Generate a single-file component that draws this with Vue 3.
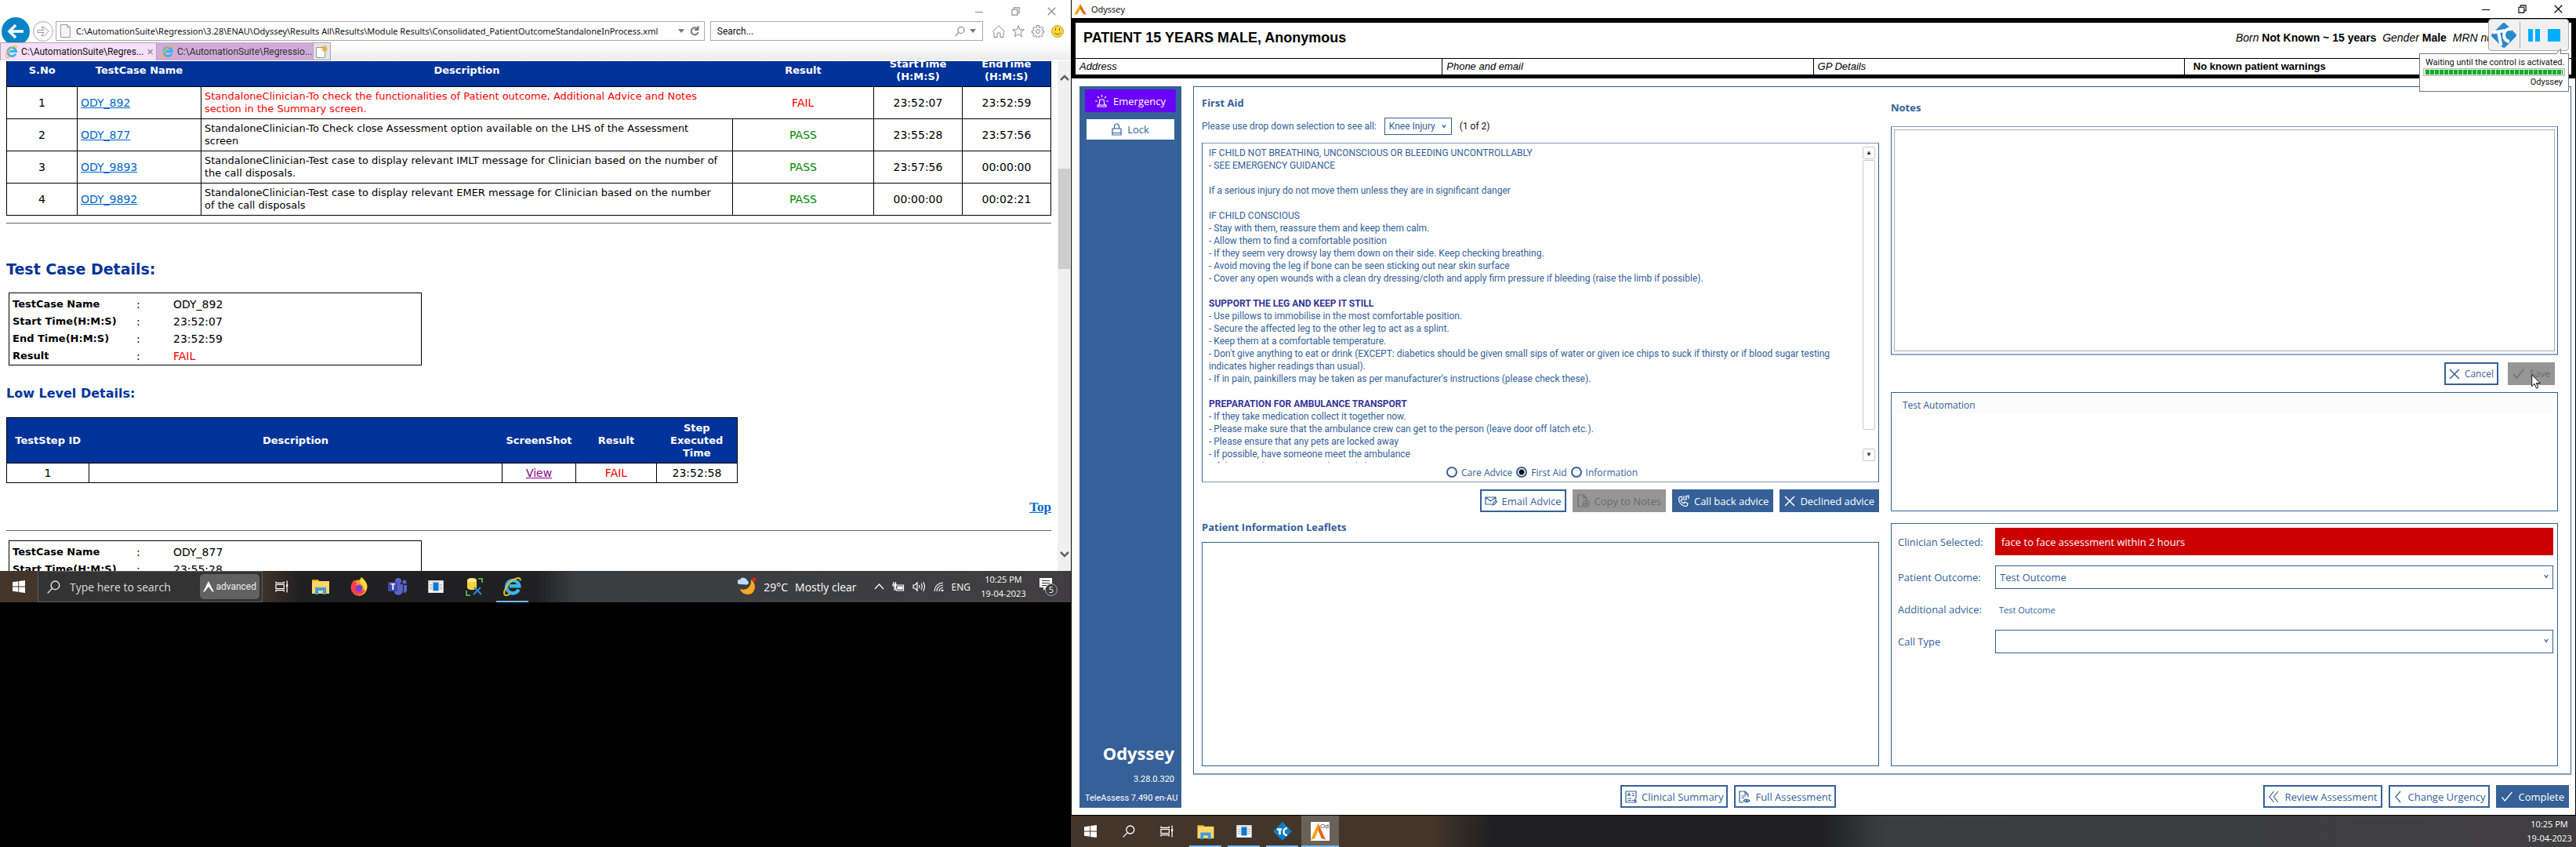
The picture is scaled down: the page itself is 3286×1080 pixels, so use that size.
<script setup>
import { ref } from 'vue'

const reportUrl = ref('C:\\AutomationSuite\\Regression\\3.28\\ENAU\\Odyssey\\Results All\\Results\\Module Results\\Consolidated_PatientOutcomeStandaloneInProcess.xml')
const advice = ref('First Aid')
const adviceKinds = ['Care Advice', 'First Aid', 'Information']

const cases = [
  { id: 'ODY_892', text: 'StandaloneClinician-To check the functionalities of Patient outcome, Additional Advice and Notes section in the Summary screen.', result: 'FAIL', start: '23:52:07', end: '23:52:59' },
  { id: 'ODY_877', text: 'StandaloneClinician-To Check close Assessment option available on the LHS of the Assessment screen', result: 'PASS', start: '23:55:28', end: '23:57:56' },
  { id: 'ODY_9893', text: 'StandaloneClinician-Test case to display relevant IMLT message for Clinician based on the number of the call disposals.', result: 'PASS', start: '23:57:56', end: '00:00:00' },
  { id: 'ODY_9892', text: 'StandaloneClinician-Test case to display relevant EMER message for Clinician based on the number of the call disposals', result: 'PASS', start: '00:00:00', end: '00:02:21' }
]

const adviceBlocks = [
  { lines: ['IF CHILD NOT BREATHING, UNCONSCIOUS OR BLEEDING UNCONTROLLABLY', '- SEE EMERGENCY GUIDANCE'] },
  { lines: ['If a serious injury do not move them unless they are in significant danger'] },
  { lines: ['IF CHILD CONSCIOUS', '- Stay with them, reassure them and keep them calm.', '- Allow them to find a comfortable position', '- If they seem very drowsy lay them down on their side. Keep checking breathing.', '- Avoid moving the leg if bone can be seen sticking out near skin surface', '- Cover any open wounds with a clean dry dressing/cloth and apply firm pressure if bleeding (raise the limb if possible).'] },
  { title: 'SUPPORT THE LEG AND KEEP IT STILL', lines: ['- Use pillows to immobilise in the most comfortable position.', '- Secure the affected leg to the other leg to act as a splint.', '- Keep them at a comfortable temperature.', "- Don't give anything to eat or drink (EXCEPT: diabetics should be given small sips of water or given ice chips to suck if thirsty or if blood sugar testing indicates higher readings than usual).", "- If in pain, painkillers may be taken as per manufacturer's instructions (please check these)."] },
  { title: 'PREPARATION FOR AMBULANCE TRANSPORT', lines: ['- If they take medication collect it together now.', '- Please make sure that the ambulance crew can get to the person (leave door off latch etc.).', '- Please ensure that any pets are locked away', '- If possible, have someone meet the ambulance', '- If their condition worsens please dial 999'] }
]
</script>

<template>
  <svg class="defs" aria-hidden="true">
    <symbol id="i-win" viewBox="0 0 16 16"><path fill="#fff" d="M0 2.2 7.3 1.2V7.5H0zM8.2 1.1 16 0V7.5H8.2zM0 8.5H7.3V14.8L0 13.8zM8.2 8.5H16V16L8.2 14.9z" /></symbol>
    <symbol id="i-search" viewBox="0 0 16 16"><g fill="none" stroke="currentColor" stroke-width="1.3"><circle cx="9.8" cy="6" r="5" /><path d="M6.3 9.6 .7 15.4" /></g></symbol>
    <symbol id="i-tasks" viewBox="0 0 18 16"><g fill="none" stroke="#fff" stroke-width="1.3"><path d="M1 1v2h11V1M1 15v-2h11v2" /><rect x="1" y="5.3" width="11" height="5.4" /><path d="M16 0v16" /></g><rect x="14.8" y="5" width="2.4" height="3" fill="#fff" /></symbol>
    <symbol id="i-folder" viewBox="0 0 22 20"><path fill="#e8a200" d="M0 1h8l2 3H0z" /><path fill="#ffd666" d="M0 3h22v16H0z" /><path fill="#3f9be0" d="M4 11h14v9h-4v-5H8v5H4z" /></symbol>
    <symbol id="i-console" viewBox="0 0 22 18"><rect width="22" height="18" fill="#ddd" /><rect x="1" y="3" width="20" height="14" fill="#f7f7f7" /><rect x="7" y="3" width="8" height="12" fill="#0b78d7" /><path stroke="#999" d="M2 6h4M2 9h4M2 12h4M16 6h4M16 9h4M16 12h4" /></symbol>
    <symbol id="i-ie" viewBox="0 0 22 22"><path fill="none" stroke="#3cb4ea" stroke-width="4" d="M18 14.500a7.500 7.500 0 1 1 .7-4.200H7" /><path fill="none" stroke="#f0c030" stroke-width="1.800" d="M1.500 20.500C-1 15 8 4 15 1.500c3.500-1.200 5.300-.2 4.800 2.500M1.500 20.500c1.500 1.500 4 .5 6.500-1" /></symbol>
    <symbol id="i-flame" viewBox="0 0 16 18"><path fill="#f5a400" d="M8 0 0 18l4.500-1.500L8 8z" /><path fill="#e8641b" d="m8 0 8 18-4.500-1.500L8 8z" /></symbol>
    <symbol id="i-cross" viewBox="0 0 14 14"><path d="m1 1 12 12M13 1 1 13" fill="none" stroke="currentColor" stroke-width="1.500" /></symbol>
    <symbol id="i-tick" viewBox="0 0 16 14"><path d="m1 8 4 5L15 1" fill="none" stroke="currentColor" stroke-width="1.500" /></symbol>
    <symbol id="i-restore" viewBox="0 0 12 12"><path d="M1 3.500h7.500V11H1zM3.500 3.500V1H11v7.500H8.500" fill="none" stroke="currentColor" stroke-width="1.200" /></symbol>
    <symbol id="i-chev" viewBox="0 0 6 6"><path d="m.8 1 2.200 3.500L5.200 1" fill="none" stroke="currentColor" stroke-width="1.300" /></symbol>
    <symbol id="i-tc" viewBox="0 0 32 32"><path fill="#2a88cc" d="M14 1q2-2 4 0l13 13q2 2 0 4L18 31q-2 2-4 0L1 18q-2-2 0-4z" /><path fill="none" stroke="#fff" stroke-width="4" d="M2 12.500 17 10M9 12l3.500 17M26 8.500c-11-4-14 14-3 15.500" /></symbol>
  </svg>
  <div class="desktop">
    <section class="screen left">
      <header class="ie-top">
        <div class="caption grey">
          <button aria-label="Minimise"><svg width="10" height="10" viewBox="0 0 10 10"><path d="M0 5.500h10" stroke="currentColor" /></svg></button>
          <button aria-label="Restore"><svg width="11" height="11"><use href="#i-restore" /></svg></button>
          <button aria-label="Close"><svg width="11" height="11"><use href="#i-cross" /></svg></button>
        </div>
        <div class="toolbar">
          <button class="back" aria-label="Back"><svg width="22" height="20" viewBox="0 0 22 20"><path d="M21 10H3M11 2l-8 8 8 8" fill="none" stroke="#fff" stroke-width="3.500" /></svg></button>
          <button class="fwd" aria-label="Forward"><svg width="16" height="14" viewBox="0 0 16 14"><path d="M1 5.500h8L6 1.500h3L15 7l-6 5.500H6l3-4H1z" fill="none" stroke="#999" /></svg></button>
          <div class="field address">
            <svg width="13" height="17" viewBox="0 0 13 17"><path d="M.5.500H9l3.500 3.500v12.500H.5zM9 .5V4h3.500" fill="#f6f6f6" stroke="#999" /></svg>
            <input v-model="reportUrl" aria-label="Address">
            <svg width="8" height="5"><path d="M0 0h8L4 5z" fill="#777" /></svg>
            <svg width="12" height="13" viewBox="0 0 12 13"><path d="M10 4.500A4.500 4.500 0 1 0 10.500 8M10.500 0v5H6" fill="none" stroke="#777" stroke-width="2" /></svg>
          </div>
          <div class="field find">
            <input placeholder="Search..." aria-label="Search the web">
            <svg class="loupe" width="13" height="14"><use href="#i-search" /></svg>
            <svg width="8" height="5"><path d="M0 0h8L4 5z" fill="#777" /></svg>
          </div>
          <nav class="tools">
            <button aria-label="Home"><svg width="16" height="16" viewBox="0 0 16 16"><path d="m.5 8.500 7.500-8 7.500 8-1.500 1V15.500H10V10H6v5.500H2V9.500z" /></svg></button>
            <button aria-label="Favourites"><svg width="16" height="16" viewBox="0 0 16 16"><path d="m8 .8 2 5.100h5.300l-4.200 3.300 1.600 5.600L8 11.500l-4.700 3.300 1.600-5.600L.7 5.900H6z" /></svg></button>
            <button aria-label="Tools"><svg width="16" height="16" viewBox="0 0 16 16"><circle cx="8" cy="8" r="2.500" /><path d="M6.500.5h3V3l1.500.6 1.800-1.700 2 2L13 5.800l.5 1.200h2v3h-2l-.6 1.200 1.600 1.800-2 2-1.700-1.600-1.300.6v2h-3v-2l-1.200-.6L3.500 15l-2-2L3 11.200 2.500 10h-2V7h2L3 5.800 1.400 4l2-2 1.800 1.600L6.500 3z" /></svg></button>
            <button aria-label="Feedback"><svg width="16" height="16" viewBox="0 0 16 16"><circle class="face" cx="8" cy="8" r="7.500" /><path class="smile" d="M5.500 4v3M10.500 4v3M4 9.500c2 3 6 3 8 0" /></svg></button>
          </nav>
        </div>
        <div class="tabs">
          <a href="#report" class="tab on"><svg width="16" height="16"><use href="#i-ie" /></svg><span>C:\AutomationSuite\Regres...</span><b>✕</b></a>
          <a href="#other" class="tab"><svg width="16" height="16"><use href="#i-ie" /></svg><span>C:\AutomationSuite\Regressio...</span></a>
          <button class="newtab" aria-label="New tab"><svg width="15" height="16" viewBox="0 0 15 16"><path d="M.5 2.500h11v13H.5z" fill="#fff" stroke="#999" /><path d="M11 0v8M7 4h8M8 1l6 6M14 1 8 7" stroke="#f0a030" stroke-width="1.200" /></svg></button>
        </div>
      </header>

      <div class="viewport">
        <main id="report" class="report">
          <table class="grid summary">
            <colgroup><col class="c-no"><col class="c-name"><col><col class="c-res"><col class="c-time"><col class="c-time"></colgroup>
            <thead><tr><th>S.No</th><th>TestCase Name</th><th>Description</th><th>Result</th><th>StartTime (H:M:S)</th><th>EndTime (H:M:S)</th></tr></thead>
            <tbody>
              <tr v-for="(c, i) in cases" :key="c.id" :class="c.result">
                <td class="mid">{{ i + 1 }}</td>
                <td><a href="#report">{{ c.id }}</a></td>
                <td class="desc">{{ c.text }}</td>
                <td class="mid res">{{ c.result }}</td>
                <td class="mid">{{ c.start }}</td>
                <td class="mid">{{ c.end }}</td>
              </tr>
            </tbody>
          </table>
          <hr>
          <h1>Test Case Details:</h1>
          <table class="facts">
            <tbody>
              <tr><th>TestCase Name</th><td>:</td><td>ODY_892</td></tr>
              <tr><th>Start Time(H:M:S)</th><td>:</td><td>23:52:07</td></tr>
              <tr><th>End Time(H:M:S)</th><td>:</td><td>23:52:59</td></tr>
              <tr><th>Result</th><td>:</td><td class="bad">FAIL</td></tr>
            </tbody>
          </table>
          <h2>Low Level Details:</h2>
          <table class="grid steps">
            <colgroup><col class="s-id"><col><col class="s-shot"><col class="s-time"><col class="s-time"></colgroup>
            <thead><tr><th>TestStep ID</th><th>Description</th><th>ScreenShot</th><th>Result</th><th>Step Executed Time</th></tr></thead>
            <tbody><tr><td class="mid">1</td><td></td><td class="mid"><a class="seen" href="#report">View</a></td><td class="mid bad">FAIL</td><td class="mid">23:52:58</td></tr></tbody>
          </table>
          <p class="top"><a href="#report">Top</a></p>
          <hr class="second">
          <table class="facts">
            <tbody>
              <tr><th>TestCase Name</th><td>:</td><td>ODY_877</td></tr>
              <tr><th>Start Time(H:M:S)</th><td>:</td><td>23:55:28</td></tr>
            </tbody>
          </table>
        </main>
        <div class="vscroll">
          <svg width="12" height="10" viewBox="0 0 12 10"><path d="m1 8 5-5 5 5" fill="none" stroke="#606060" stroke-width="2.500" /></svg>
          <i></i>
          <svg width="12" height="10" viewBox="0 0 12 10"><path d="m1 2 5 5 5-5" fill="none" stroke="#606060" stroke-width="2.500" /></svg>
        </div>
      </div>

      <footer class="taskbar">
        <button class="start" aria-label="Start"><svg width="16" height="16"><use href="#i-win" /></svg></button>
        <div class="tsearch">
          <svg width="17" height="17"><use href="#i-search" /></svg>
          <input placeholder="Type here to search" aria-label="Type here to search">
          <span class="badge"><svg width="14" height="14" viewBox="0 0 14 14"><path d="M7 0 0 14l2.500-1L7 7l4.500 6 2.500 1z" fill="#fff" /></svg>advanced</span>
        </div>
        <button aria-label="Task view"><svg width="17" height="16"><use href="#i-tasks" /></svg></button>
        <button aria-label="File Explorer"><svg width="22" height="20"><use href="#i-folder" /></svg></button>
        <button aria-label="Firefox"><svg width="24" height="24" viewBox="0 0 24 24"><circle cx="12" cy="13.500" r="10.200" fill="#ff9a1c" /><path fill="#ff3b4e" d="M2 10C3 6 5 4 6 3l1 3 2 1-1 4 5 2-3 3c2 3 7 2 9-1 0 6-6 9-11 7-5-2-7-7-6-12z" /><path fill="#ffd83a" d="M15 0c5 4 9 9 7 15-2 3-4 2-4-1 0-4-5-5-5-9 0-2 1-4 2-5z" /><circle cx="12" cy="14" r="4.500" fill="#7a3fd6" /></svg></button>
        <button aria-label="Teams"><svg width="24" height="22" viewBox="0 0 24 22"><g fill="#5b63c8"><circle cx="13" cy="4" r="4" /><circle cx="21" cy="5" r="2.600" /><path d="M8 8h11v8a6 6 0 0 1-11 3zM20 9h4v6a4 4 0 0 1-4 4z" /></g><path fill="#4046a8" d="M0 5h12v12H0z" /><text x="3" y="15" font-size="11" font-weight="bold" fill="#fff">T</text></svg></button>
        <button aria-label="Console"><svg width="22" height="16"><use href="#i-console" /></svg></button>
        <button aria-label="Database tools"><svg width="22" height="23" viewBox="0 0 22 23"><path fill="#ffd23f" d="M2 2c3-3 9-3 12 0v11c-3 3-9 3-12 0z" /><ellipse cx="8" cy="3" rx="6" ry="2" fill="#ffe9a0" /><path d="M16 1h5v5M1 16v6h5" fill="none" stroke="#4aa84a" stroke-width="2" /><path d="m10 21 9-9M11 12l9 9" stroke="#2a88cc" stroke-width="2.200" /></svg></button>
        <button class="run" aria-label="Internet Explorer"><svg width="24" height="24"><use href="#i-ie" /></svg></button>
        <span class="grow"></span>
        <div class="weather">
          <svg width="24" height="24" viewBox="0 0 24 24"><path fill="#f7a823" d="M17 3c8 5 6 19-4 19-5 0-9-3-10-7 8 3 15-3 14-12z" /><path fill="#c3d9fb" d="M2 9a3 3 0 0 1 1-6 5 5 0 0 1 9 1 3 3 0 0 1 0 5.500z" /><circle cx="21" cy="3" r="2.700" fill="#d0271d" /></svg>
          <span>29°C</span><span>Mostly clear</span>
        </div>
        <div class="tray">
          <svg width="13" height="8" viewBox="0 0 13 8"><path d="m1 7 5.500-6L12 7" /></svg>
          <svg width="16" height="12" viewBox="0 0 16 12"><path d="M3.500 4h11v7h-9zM2 0v3M4.500 0v3M1 3h4v2H1zM3 5v5h2" /><path d="M7 6h6v3H7z" fill="#fff" /></svg>
          <svg width="17" height="14" viewBox="0 0 17 14"><path d="M1 5h2l3-3v10L3 9H1zM8.500 5q1 2 0 4M11 3q2.500 4 0 8M13.500 1q4 6 0 12" /></svg>
          <svg width="13" height="12" viewBox="0 0 13 12"><path d="M1 12Q2 2 12 1M4 12q0-7 8-8M7 12q0-4 5-5" /><circle cx="11" cy="11" r="1" /></svg>
          <span>ENG</span>
        </div>
        <time class="clock">10:25 PM<br>19-04-2023</time>
        <span class="bell">
          <svg width="24" height="24" viewBox="0 0 24 24"><path fill="#fff" d="M1 1h16v12H10l-4 4v-4H1z" /><path d="M4 4.500h10M4 7.500h10M4 10.500h6" stroke="#333" /><circle cx="16" cy="16" r="7.500" fill="#3a3c3f" stroke="#aaa" /></svg><b>5</b>
        </span>
      </footer>
    </section>

    <section class="screen right">
      <header class="titlebar">
        <svg width="16" height="14" viewBox="0 0 16 18" preserveAspectRatio="none"><use href="#i-flame" /></svg><span>Odyssey</span>
        <div class="caption dark">
          <button aria-label="Minimise"><svg width="10" height="10" viewBox="0 0 10 10"><path d="M0 5.500h10" stroke="currentColor" /></svg></button>
          <button aria-label="Restore"><svg width="11" height="11"><use href="#i-restore" /></svg></button>
          <button aria-label="Close"><svg width="11" height="11"><use href="#i-cross" /></svg></button>
        </div>
      </header>
      <div class="patient">
        <div class="who">
          <h1>PATIENT 15 YEARS MALE, Anonymous</h1>
          <p><i>Born</i> <b>Not Known ~ 15 years</b> <i class="gap">Gender</i> <b>Male</b> <i class="gap">MRN number</i></p>
        </div>
        <div class="contact"><i>Address</i><i>Phone and email</i><i>GP Details</i><b>No known patient warnings</b></div>
      </div>
      <div class="runner">
        <div class="runbar">
          <svg width="32" height="32"><use href="#i-tc" /></svg>
          <span class="rule"></span>
          <button class="pause" aria-label="Pause"></button>
          <button class="stop" aria-label="Stop"></button>
        </div>
        <div class="bubble">
          <svg class="tail" width="12" height="8" viewBox="0 0 12 8"><path d="M.5 8 6.500 1V8" fill="#fff" stroke="#777" /></svg>
          <p>Waiting until the control is activated.</p>
          <div class="progress"><i></i></div>
          <p class="end">Odyssey</p>
        </div>
      </div>

      <div class="app">
        <div class="work">
          <aside>
            <button class="emergency"><svg width="17" height="16" viewBox="0 0 17 16"><path d="M5 13 6 6h5l1 7M3 15V13h11v2zM8.500 0v3M3 2l2 2M14 2l-2 2M0 8h3M14 8h3" /></svg>Emergency</button>
            <button class="lock"><svg width="13" height="16" viewBox="0 0 13 16"><path d="M1 7h11v8H1zM3.500 7V4a3 3 0 0 1 6 0v3M1 12.500h11" /></svg>Lock</button>
            <div class="brand"><strong>Odyssey</strong><span>3.28.0.320</span><span>TeleAssess 7.490 en-AU</span></div>
          </aside>
          <div class="panel">
            <div class="col">
              <h2>First Aid</h2>
              <div class="pick">
                <label for="kind">Please use drop down selection to see all:</label>
                <span class="select"><select id="kind"><option>Knee Injury</option></select><svg width="6" height="6"><use href="#i-chev" /></svg></span>
                <span class="count">(1 of 2)</span>
              </div>
              <div class="box advice">
                <div class="scroller">
                  <div class="words">
                    <p v-for="(b, i) in adviceBlocks" :key="i">
                      <strong v-if="b.title">{{ b.title }}</strong>
                      <span v-for="l in b.lines" :key="l">{{ l }}</span>
                    </p>
                  </div>
                  <div class="rail"><button aria-label="Scroll up">▲</button><i></i><button aria-label="Scroll down">▼</button></div>
                </div>
                <div class="kinds">
                  <label v-for="k in adviceKinds" :key="k"><input v-model="advice" type="radio" name="advice" :value="k">{{ k }}</label>
                </div>
              </div>
              <div class="actions">
                <button class="btn"><svg width="16" height="16" viewBox="0 0 16 16"><path d="M9 12H1V3h13v4M1 3l6.500 5L14 3M10 13l1-3 3-3 1.500 1.500-3 3.500z" /></svg>Email Advice</button>
                <button class="btn off" disabled><svg width="16" height="18" viewBox="0 0 16 18"><path d="M7 16H1V1h7l4 4v3M8 1v4h4" /><circle cx="11" cy="12.500" r="4" /><path d="M11 10v5M8.500 12.500h5" /></svg>Copy to Notes</button>
                <button class="btn solid"><svg width="16" height="16" viewBox="0 0 16 16"><path d="M3 3l3-1 1 4-2 1c1 2 2 3 4 4l1-2 4 2-1 3c-5 2-12-4-10-11zM9 5V1M12 1v5H8M11 2l4-1v4" /></svg>Call back advice</button>
                <button class="btn solid"><svg width="14" height="14"><use href="#i-cross" /></svg>Declined advice</button>
              </div>
              <h2>Patient Information Leaflets</h2>
              <div class="box leaflets"></div>
            </div>

            <div class="col notes">
              <h2>Notes</h2>
              <div class="box pad"><textarea aria-label="Notes"></textarea></div>
              <div class="actions wide">
                <button class="btn small"><svg width="14" height="14"><use href="#i-cross" /></svg>Cancel</button>
                <button class="btn off save" disabled><svg width="16" height="13"><use href="#i-tick" /></svg>Save</button>
                <svg class="cursor" width="12" height="19" viewBox="0 0 12 19"><path d="M.7.700v15l3.400-3.300 2.400 5.700 2.300-1-2.400-5.500h4.900z" fill="#fff" stroke="#111" /></svg>
              </div>
              <div class="box list"><p>Test Automation</p></div>
              <form class="box form" @submit.prevent>
                <span class="lab">Clinician Selected:</span><output class="urgent">face to face assessment within 2 hours</output>
                <label class="lab" for="outcome">Patient Outcome:</label>
                <span class="select tall"><select id="outcome"><option>Test Outcome</option></select><svg width="6" height="6"><use href="#i-chev" /></svg></span>
                <span class="lab">Additional advice:</span><span class="extra">Test Outcome</span>
                <label class="lab" for="call">Call Type</label>
                <span class="select tall"><select id="call"><option></option></select><svg width="6" height="6"><use href="#i-chev" /></svg></span>
              </form>
            </div>
          </div>
          <nav class="bottom">
            <span></span>
            <div>
              <button class="btn"><svg width="15" height="16" viewBox="0 0 15 16"><path d="M1 1h13v9M14 14v1H1V1M3.500 7 5 3.500 6.500 7M8.500 4H12M8.500 6.500H12M3.500 10H8M3.500 12.500H8M9 12.500h5M12 10.500l2 2-2 2" /></svg>Clinical Summary</button>
              <button class="btn"><svg width="15" height="16" viewBox="0 0 15 16"><path d="M6 15H1V1h7l4 4v3M8 1v4h4M3.500 7H9M3.500 9.500H7M6 13q3.500-4 8 0-4 3.500-8 0" /><circle cx="10" cy="13" r="1" /></svg>Full Assessment</button>
            </div>
            <div>
              <button class="btn"><svg width="15" height="16" viewBox="0 0 15 16"><path d="M7.500 1 2 8l5.500 7M13 1 7.500 8l5.500 7" /></svg>Review Assessment</button>
              <button class="btn"><svg width="13" height="16" viewBox="0 0 13 16"><path d="M9 1 3 8l6 7" /></svg>Change Urgency</button>
              <button class="btn solid"><svg width="16" height="13"><use href="#i-tick" /></svg>Complete</button>
            </div>
          </nav>
        </div>
      </div>
      <footer class="taskbar second-bar">
        <button class="start" aria-label="Start"><svg width="16" height="16"><use href="#i-win" /></svg></button>
        <button aria-label="Search" class="white"><svg width="16" height="16"><use href="#i-search" /></svg></button>
        <button aria-label="Task view"><svg width="17" height="16"><use href="#i-tasks" /></svg></button>
        <button class="run" aria-label="File Explorer"><svg width="22" height="19"><use href="#i-folder" /></svg></button>
        <button class="run" aria-label="Console"><svg width="22" height="16"><use href="#i-console" /></svg></button>
        <button class="run" aria-label="TestComplete"><svg width="24" height="24" viewBox="0 0 24 24"><path fill="#0b7fc4" d="M12 0 24 12 12 24 0 12z" /><path fill="none" stroke="#fff" stroke-width="2.500" d="M5 9.500h6M8.500 9.500V16M18 8c-6 0-6 9 0 9" /></svg></button>
        <button class="run active" aria-label="Odyssey"><svg width="24" height="24" viewBox="0 0 24 24"><rect width="24" height="24" fill="#fff" /><use href="#i-flame" x="0" y="1" width="19" height="22" /><text x="12" y="8" font-size="8" fill="#333">Od</text></svg></button>
        <span class="grow"></span>
        <time class="clock">10:25 PM<br>19-04-2023</time>
      </footer>
    </section>
  </div>
</template>

<style>
html, body { margin: 0; background: #000; }
</style>

<style scoped>
* { box-sizing: border-box; }
svg { flex: none; }
.defs { position: absolute; width: 0; height: 0; }
.desktop { display: grid; grid-template-columns: 1366fr 1920fr; align-items: start; min-height: 100vh; background: #000; font-family: "Open Sans", "Noto Sans", sans-serif; }
button, input, select, textarea { font: inherit; color: inherit; }
button { border: 0; padding: 0; background: none; display: flex; align-items: center; justify-content: center; }
input { border: 0; outline: 0; padding: 0; background: none; min-width: 0; }
p, h1, h2, hr { margin: 0; }
.screen { display: flex; flex-direction: column; min-width: 0; background: #fff; }
.left { aspect-ratio: 1366 / 768; overflow: hidden; }
.right { min-height: 100vh; position: relative; }
.grow { flex: 1; }

.ie-top { height: 78px; flex: none; display: flex; flex-direction: column; background: linear-gradient(#fff 56px, #ebebeb 76px, #fff 77px); }
.caption { display: flex; align-items: center; }
.caption button { width: 46px; height: 22px; }
.grey { justify-content: flex-end; height: 25px; padding: 4px 2px 0; color: #888; }
.toolbar { display: flex; align-items: center; height: 29px; padding: 0 9px 0 2px; }
.back { width: 36px; height: 36px; border-radius: 50%; background: #0a84c6; flex: none; }
.fwd { width: 26px; height: 26px; border: 1px solid #aaa; border-radius: 50%; margin: 0 3px 0 4px; flex: none; }
.field { display: flex; align-items: center; height: 25px; border: 1px solid #aaa; background: #fff; font: 12px Roboto, sans-serif; color: #111; }
.address { flex: 839; padding: 0 6px 0 5px; gap: 7px; font: 11px "Noto Sans", sans-serif; }
.address input, .find input { flex: 1; }
.find { flex: 340; margin-left: 7px; padding: 0 8px; gap: 6px; }
.find input::placeholder { color: #111; opacity: 1; }
.loupe { color: #777; }
.tools { display: flex; gap: 9px; margin-left: 12px; }
.tools svg { fill: none; stroke: #888; }
.tools .face { fill: #ffd83a; stroke: #b9a04a; }
.tools .smile { stroke: #6b5a20; }
.tabs { display: flex; height: 23px; position: relative; }
.tab { display: flex; align-items: center; gap: 4px; width: 200px; padding: 0 6px; background: #d2abd9; border-right: 1px solid #aaa; color: #333; text-decoration: none; font: 12px Roboto, sans-serif; white-space: nowrap; }
.tab.on { background: #f6dff9; border: 1px solid #aaa; border-bottom: 0; color: #111; }
.tab span { flex: 1; }
.tab b { font-size: 11px; color: #999; }
.newtab { width: 22px; background: #e4e4e4; border: 1px solid #aaa; border-left: 0; }

.viewport { flex: 1; min-height: 0; display: flex; font-family: "DejaVu Sans", Verdana, sans-serif; font-size: 14px; }
.report { flex: 1; padding: 0 8px; overflow: hidden; }
.grid { border-collapse: collapse; table-layout: fixed; color: #000; line-height: 16px; }
.grid th { background: #039; color: #fff; padding: 4px 8px; font-size: 13px; }
.grid thead, .grid td { border: 1px solid #000; }
.grid td { padding: 4px; }
.grid .mid { text-align: center; }
.summary { width: 100%; margin-top: -10px; }
.summary th { height: 42px; }
.summary td { height: 41px; }
.summary .desc { font-size: 13px; padding-right: 14px; }
.summary .FAIL .desc { border-right: 0; }
.summary .FAIL .res { border-left: 0; }
.FAIL .desc, .FAIL .res, .bad { color: #f00; }
.PASS .res { color: #080; }
.grid a, .top a { color: #06c; }
.grid a.seen { color: #808; }
.c-no { width: 90px; }
.c-name { width: 158px; }
.c-res { width: 180px; }
.c-time { width: 113px; }
hr { border: 0; border-top: 1px solid #666; margin-top: 9px; }
.report h1 { font-size: 19px; line-height: 24px; margin-top: 46px; color: #039; }
.report h2 { font-size: 16px; line-height: 20px; margin-top: 26px; color: #039; }
.facts { width: 527px; margin: 18px 0 0 3px; border: 1px solid #000; border-spacing: 0; padding: 3px 4px 0; line-height: 20px; }
.facts tr { height: 22px; }
.facts th { width: 158px; text-align: left; padding: 0; font-size: 13px; }
.facts td { width: 47px; padding: 0; }
.facts td:last-child { width: auto; }
.steps { width: 933px; margin-top: 20px; }
.steps thead th { height: 58px; padding: 4px; }
.steps td { height: 25px; }
.s-id { width: 105px; }
.s-shot { width: 94px; }
.s-time { width: 103px; }
.top { text-align: right; font: bold 17px/20px "Liberation Serif", serif; margin-top: 21px; }
hr.second { margin-top: 19px; }
.second + .facts { margin-top: 12px; }
.vscroll { width: 17px; background: #f0f0f0; display: flex; flex-direction: column; align-items: center; padding: 16px 0; }
.vscroll i { width: 15px; height: 128px; margin: 111px 0 auto; background: #cdcdcd; }

.taskbar { flex: none; height: 40px; display: flex; align-items: center; color: #fff; background: linear-gradient(90deg, #43352a 0%, #43352a 24%, #202022 28%, #202022 50%, #3b3e41 54%, #403e40 100%); }
.taskbar button { width: 49px; height: 40px; }
.taskbar button.run { box-shadow: inset 0 -2px #76b9ed; width: 41px; margin: 0 4px; }
.taskbar button.active { width: 48px; margin: 0; background: #6a6158; }
.tsearch { display: flex; align-items: center; width: 287px; height: 40px; padding: 0 3px 0 11px; gap: 12px; background: #333; border: 1px solid #5c5c5c; color: #eee; }
.tsearch input { flex: 1; font-size: 14px; }
.tsearch input::placeholder { color: #ddd; opacity: 1; }
.badge { display: flex; align-items: center; gap: 2px; height: 32px; padding: 0 4px; border-radius: 5px; background: #616161; font: 12px Roboto, sans-serif; }
.weather { display: flex; align-items: center; gap: 9px; font-size: 14px; margin-right: 22px; white-space: nowrap; }
.tray { display: flex; align-items: center; gap: 10px; font-size: 12px; margin-right: 13px; }
.tray svg { fill: none; stroke: #fff; stroke-width: 1.2; }
.clock { font-size: 11px; line-height: 18px; text-align: center; width: 58px; white-space: nowrap; }
.bell { position: relative; margin: 0 17px 0 16px; height: 24px; }
.bell b { position: absolute; right: 5px; bottom: 1px; font: 11px/14px "Open Sans", sans-serif; }
.left .taskbar .start { width: 48px; }
.second-bar .clock { margin-right: 5px; }
.white { color: #fff; }

.titlebar { display: flex; align-items: center; gap: 6px; height: 23px; padding-left: 3px; font-size: 11px; color: #000; border-left: 1px solid #000; }
.titlebar .caption { margin-left: auto; }
.patient { background: #000; padding: 6px 6px 5px; height: 77px; display: flex; flex-direction: column; gap: 1px; font-family: "Liberation Sans", Arial, sans-serif; color: #000; }
.who { flex: 1; display: flex; align-items: center; justify-content: space-between; background: #fff; padding: 0 68px 8px 10px; white-space: nowrap; }
.who h1 { font-size: 18px; line-height: 24px; }
.who p { font-size: 14px; }
.gap { margin-left: 4px; }
.contact { display: grid; grid-template-columns: 468fr 473fr 473fr 494fr; height: 20px; gap: 1px; font-size: 13px; line-height: 20px; }
.contact > * { background: #fff; padding-left: 5px; }
.contact b { padding-left: 11px; }
.runner { position: absolute; top: 24px; right: 9px; display: flex; flex-direction: column; align-items: flex-end; }
.runbar { display: flex; align-items: center; width: 103px; height: 41px; padding: 0 10px 0 3px; border: 1px solid #aaa; border-radius: 4px; background: #f0f0f0; }
.rule { width: 1px; height: 34px; margin-left: 4px; background: #aaa; }
.pause { width: 15px; height: 16px; margin-left: auto; border: solid #00aeff; border-width: 0 6px; }
.stop { width: 16px; height: 16px; margin-left: 10px; background: #00aeff; }
.bubble { position: relative; width: 191px; height: 49px; margin-top: 3px; padding: 3px 4px 4px; border: 1px solid #777; background: #fff; font: 11px/15px Roboto, sans-serif; color: #111; }
.bubble p { padding-left: 3px; white-space: nowrap; }
.bubble .end { text-align: right; padding: 0 3px 0 0; }
.progress { height: 10px; border: 1px solid #bbb; background: #e6e6e6; padding: 1px 2px; }
.progress i { display: block; height: 6px; background: repeating-linear-gradient(90deg, #06b025 0 5px, #e6e6e6 5px 6px); }
.tail { position: absolute; right: 4px; top: -8px; }

.app { flex: 1; display: flex; border: solid #000; border-width: 0 1px 1px; color: #336199; font-size: 13px; }
.work { flex: 1; min-width: 0; display: grid; grid-template-columns: 130px minmax(0, 1fr); grid-template-rows: 1fr auto; column-gap: 15px; padding: 10px 5px 9px 10px; }
aside { grid-row: 1 / 3; background: #356198; color: #fff; display: flex; flex-direction: column; padding: 4px 7px 0; }
aside svg, .btn svg { fill: none; stroke: currentColor; stroke-width: 1.2; }
.emergency { height: 29px; background: #6a00ff; border: 1px solid #5a14e0; gap: 6px; font-size: 13px; }
.lock { height: 26px; margin: 9px 2px; background: #fff; color: #356198; gap: 7px; font-size: 13px; }
.brand { margin-top: auto; padding-right: 2px; display: flex; flex-direction: column; text-align: right; font: 11px/24px Roboto, sans-serif; white-space: nowrap; }
.brand strong { font: bold 22px/40px "Open Sans", sans-serif; margin-bottom: 2px; }
.panel { display: grid; grid-template-columns: 864fr 851fr; column-gap: 15px; border: 1px solid #356198; border-bottom: 2px solid #7d9cc3; padding: 10px 16px 9px 10px; }
.col { display: flex; flex-direction: column; min-width: 0; }
.col h2 { font-size: 13px; line-height: 20px; flex: none; }
.notes h2 { margin-top: 6px; }
.pick { display: flex; align-items: center; height: 22px; margin: 9px 0 10px; gap: 10px; font: 12px Roboto, sans-serif; }
.count { color: #111; }
.select { position: relative; display: block; height: 22px; }
.select select { appearance: none; height: 100%; width: 100%; border: 1px solid #2f5f9b; border-radius: 0; background: #fff; padding: 0 20px 0 5px; }
.select svg { position: absolute; right: 7px; top: 8px; pointer-events: none; }
.box { border: 1px solid #356198; background: #fff; }
.advice { height: 433px; flex: none; border-top-color: #7d9cc3; border-bottom-color: #7d9cc3; padding: 4px 4px 0 8px; }
.scroller { display: flex; height: 403px; overflow: hidden; font: 12px/16px Roboto, sans-serif; }
.words { flex: 1; min-width: 0; padding-right: 20px; }
.words p { margin-bottom: 16px; }
.words span, .words strong { display: block; }
.words strong { color: #35359a; }
.rail { width: 16px; display: flex; flex-direction: column; }
.rail button { height: 16px; border: 1px solid #c8c8c8; border-radius: 2px; font-size: 8px; color: #333; }
.rail i { height: 344px; margin: 1px 0 24px; border: 1px solid #c8c8c8; border-radius: 2px; }
.kinds { display: flex; justify-content: center; gap: 5px; height: 24px; align-items: center; font-size: 12px; }
.kinds label { display: flex; align-items: center; gap: 5px; }
.kinds input { appearance: none; width: 14px; height: 14px; margin: 0; border: 2px solid #356198; border-radius: 50%; }
.kinds input:checked { background: radial-gradient(#111 3px, #fff 4px); }
.actions { position: relative; display: flex; justify-content: flex-end; gap: 8px; margin: 9px 0; height: 29px; flex: none; }
.wide { gap: 12px; padding-right: 4px; }
.btn { height: 29px; padding: 0 4px; gap: 6px; border: 2px solid #356198; background: #fff; color: #356198; font-size: 13px; white-space: nowrap; }
.solid { background: #356198; color: #fff; }
.off { background: #969696; border-color: #969696; color: #6b6b6b; }
.small { font-size: 12px; }
.save { width: 60px; font-size: 12px; }
.cursor { position: absolute; right: 22px; top: 15px; }
.leaflets { flex: 1; margin-top: 9px; }
.pad { height: 292px; margin-top: 14px; padding: 3px; border-top-color: #7d9cc3; border-bottom: 2px solid #8fa9cb; flex: none; }
.pad textarea { display: block; width: 100%; height: 100%; border: 1px solid #abadb3; resize: none; outline: 0; }
.list { height: 152px; padding: 5px; flex: none; }
.list p { background: #fbfbfb; line-height: 22px; padding-left: 9px; font-size: 12px; }
.form { flex: 1; margin-top: 15px; padding: 5px 5px 5px 8px; display: grid; grid-template-columns: 124px minmax(0, 1fr); grid-template-rows: 35px 30px 26px 30px; row-gap: 13px; align-content: start; align-items: center; }
.urgent { align-self: stretch; background: #c00; color: #fff; padding-left: 8px; line-height: 36px; }
.tall { height: 30px; }
.tall svg { right: 6px; top: 11px; }
.extra { padding-left: 5px; font-size: 11px; }
.bottom { display: flex; justify-content: space-between; padding: 13px 3px 0 0; }
.bottom div { display: flex; gap: 8px; }
</style>
